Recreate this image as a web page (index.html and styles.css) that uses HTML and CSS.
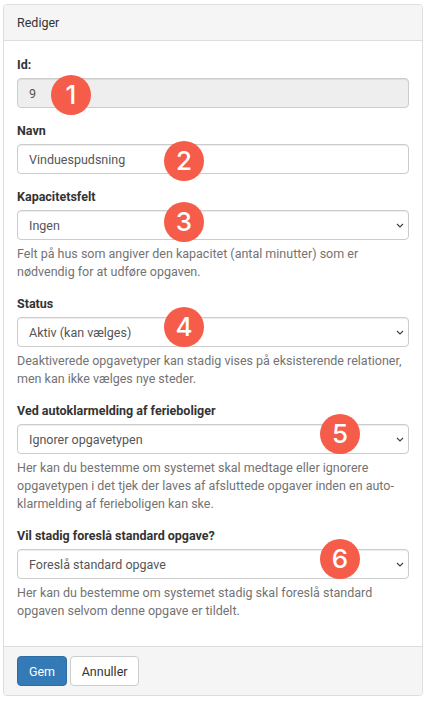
FILE: index.html
```html
<!DOCTYPE html>
<html lang="en">
  <head>
    <meta charset="UTF-8" />
    <meta name="viewport" content="width=device-width, initial-scale=1.0" />
    <title>Rediger</title>
    <link rel="stylesheet" href="styles.css">
  </head>
  <body>
    <form class="panel">
      <div class="panel-heading">Rediger</div>

      <div class="panel-body">
        <div class="form-group">
          <label class="control-label" for="id">Id:</label>
          <div class="control-wrap">
            <input class="form-control" id="id" type="text" value="9" disabled />
            <span class="marker marker-1">1</span>
          </div>
        </div>

        <div class="form-group">
          <label class="control-label" for="navn">Navn</label>
          <div class="control-wrap">
            <input class="form-control" id="navn" type="text" value="Vinduespudsning" />
            <span class="marker marker-2">2</span>
          </div>
        </div>

        <div class="form-group">
          <label class="control-label" for="kapacitet">Kapacitetsfelt</label>
          <div class="control-wrap">
            <select class="form-control" id="kapacitet"><option>Ingen</option></select>
            <svg class="chevron" viewBox="0 0 8 5"><path d="M1 1l3 3 3-3" /></svg>
            <span class="marker marker-3">3</span>
          </div>
          <p class="help-block">Felt på hus som angiver den kapacitet (antal minutter) som er nødvendig for at udføre opgaven.</p>
        </div>

        <div class="form-group">
          <label class="control-label" for="status">Status</label>
          <div class="control-wrap">
            <select class="form-control" id="status"><option>Aktiv (kan vælges)</option></select>
            <svg class="chevron" viewBox="0 0 8 5"><path d="M1 1l3 3 3-3" /></svg>
            <span class="marker marker-4">4</span>
          </div>
          <p class="help-block">Deaktiverede opgavetyper kan stadig vises på eksisterende relationer, men kan ikke vælges nye steder.</p>
        </div>

        <div class="form-group">
          <label class="control-label" for="auto">Ved autoklarmelding af ferieboliger</label>
          <div class="control-wrap">
            <select class="form-control" id="auto"><option>Ignorer opgavetypen</option></select>
            <svg class="chevron" viewBox="0 0 8 5"><path d="M1 1l3 3 3-3" /></svg>
            <span class="marker marker-right">5</span>
          </div>
          <p class="help-block">Her kan du bestemme om systemet skal medtage eller ignorere opgavetypen i det tjek der laves af afsluttede opgaver inden en auto-klarmelding af ferieboligen kan ske.</p>
        </div>

        <div class="form-group">
          <label class="control-label" for="forslag">Vil stadig foreslå standard opgave?</label>
          <div class="control-wrap">
            <select class="form-control" id="forslag"><option>Foreslå standard opgave</option></select>
            <svg class="chevron" viewBox="0 0 8 5"><path d="M1 1l3 3 3-3" /></svg>
            <span class="marker marker-right">6</span>
          </div>
          <p class="help-block">Her kan du bestemme om systemet stadig skal foreslå standard opgaven selvom denne opgave er tildelt.</p>
        </div>
      </div>

      <div class="panel-footer">
        <button class="btn btn-primary" type="button">Gem</button>
        <button class="btn btn-default" type="button">Annuller</button>
      </div>
    </form>
  </body>
</html>
```

FILE: styles.css
```css
* {
  box-sizing: border-box;
}
body {
  margin: 0;
  padding: 4px 4px 0 3px;
  background-color: #fff;
  font-family: Roboto, "Liberation Sans", sans-serif;
  font-size: 12.5px;
  color: #333;
}
.panel {
  display: flex;
  flex-direction: column;
  height: 692px;
  border: 1px solid #ddd;
  border-radius: 4px;
  box-shadow: 0 1px 1px rgba(0, 0, 0, 0.05);
}
.panel-heading {
  height: 36px;
  padding: 0 13px;
  line-height: 35px;
  background-color: #f5f5f5;
  border-bottom: 1px solid #ddd;
  border-radius: 3px 3px 0 0;
}
.panel-body {
  flex: 1;
  padding: 15px 13px 0;
}
.form-group {
  margin-bottom: 14px;
}
.control-label {
  display: block;
  margin-bottom: 4px;
  line-height: 18px;
  font-weight: 700;
}
.control-wrap {
  position: relative;
}
.form-control {
  display: block;
  width: 100%;
  height: 30px;
  padding: 0 11px;
  border: 1px solid #ccc;
  border-radius: 4px;
  background-color: #fff;
  box-shadow: inset 0 1px 1px rgba(0, 0, 0, 0.075);
  font-family: inherit;
  font-size: 12.5px;
  color: #555;
  appearance: none;
}
.form-control:disabled {
  background-color: #eee;
  opacity: 1;
}
.chevron {
  position: absolute;
  right: 5px;
  top: 13px;
  width: 8px;
  height: 5px;
  fill: none;
  stroke: #444;
  stroke-width: 1.2;
}
.help-block {
  margin: 5px 0 0;
  line-height: 18px;
  color: #737373;
}
.marker {
  position: absolute;
  width: 40px;
  height: 40px;
  border-radius: 50%;
  background-color: #f65c4a;
  color: #fff;
  font-family: Inter, "Liberation Sans", sans-serif;
  font-size: 26px;
  font-weight: 500;
  line-height: 40px;
  text-align: center;
}
.marker-1 {
  left: 34px;
  top: -3px;
}
.marker-2 {
  left: 147px;
  top: -3px;
}
.marker-3 {
  left: 147px;
  top: -8px;
}
.marker-4 {
  left: 147px;
  top: -10px;
}
.marker-right {
  left: 303px;
  top: -10px;
}
.panel-footer {
  height: 49px;
  padding: 9px 13px;
  background-color: #f5f5f5;
  border-top: 1px solid #ddd;
  border-radius: 0 0 3px 3px;
}
.btn {
  height: 30px;
  padding: 0;
  border: 1px solid transparent;
  border-radius: 4px;
  font-family: inherit;
  font-size: 12.5px;
}
.btn-primary {
  width: 50px;
  background-color: #337ab7;
  border-color: #2e6da4;
  color: #fff;
}
.btn-default {
  width: 69px;
  background-color: #fff;
  border-color: #ccc;
  color: #333;
}
```
